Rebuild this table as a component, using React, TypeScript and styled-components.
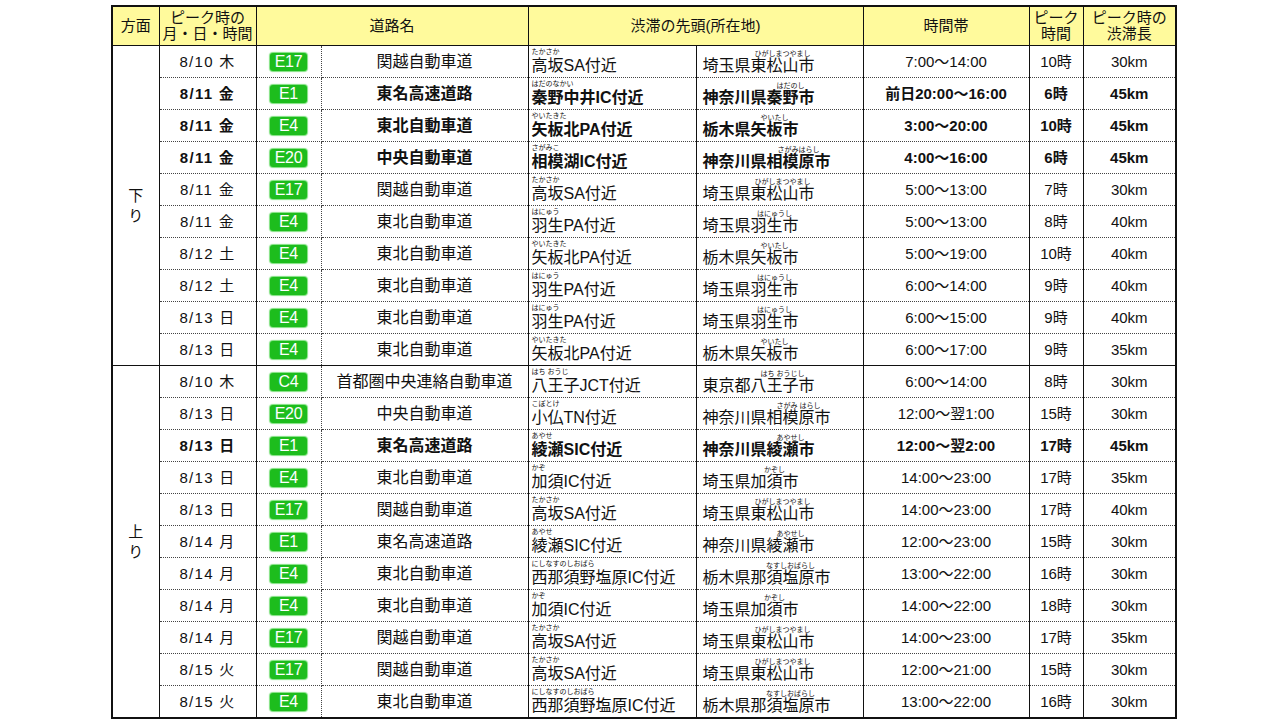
import React from 'react'
import styled, { createGlobalStyle, css } from 'styled-components'

const GlobalStyle = createGlobalStyle`
  html, body {
    margin: 0;
    padding: 0;
    background: #fff;
  }
  body {
    font-family: 'Liberation Sans', 'Noto Sans CJK JP', sans-serif;
    color: #111;
  }
`

const Page = styled.div`
  width: 1280px;
  height: 720px;
  padding: 5px 0 0 111px;
  box-sizing: border-box;
  overflow: hidden;
`

const Table = styled.table`
  width: 1064px;
  table-layout: fixed;
  border-collapse: collapse;
  border: 2px solid #111;
`

const Head = styled.th`
  height: 38px;
  padding: 0;
  background: #fffa9c;
  border-right: 1px solid #111;
  border-bottom: 1px solid #111;
  font-weight: 400;
  font-size: 15px;
  line-height: 16px;
  text-align: center;
  vertical-align: middle;
`

const Cell = styled.td<{ $bold?: boolean; $last?: boolean; $dotRight?: boolean; $align?: string; $size?: number }>`
  height: 31px;
  padding: 0;
  border-right: ${(p) => (p.$dotRight ? '1px dotted #444' : '1px solid #111')};
  border-bottom: ${(p) => (p.$last ? '1px solid #111' : '1px dotted #444')};
  font-size: ${(p) => p.$size || 15}px;
  line-height: 16px;
  text-align: ${(p) => p.$align || 'center'};
  vertical-align: middle;
  white-space: nowrap;
  overflow: hidden;
  ${(p) =>
    p.$bold &&
    css`
      font-weight: 700;
    `}
`

const DirCell = styled.td`
  padding: 0;
  border-right: 1px solid #111;
  border-bottom: 1px solid #111;
  text-align: center;
  vertical-align: middle;
  font-size: 15px;
  line-height: 20px;
`

const DateText = styled.span`
  letter-spacing: 1.3px;
`

const Badge = styled.span`
  display: inline-block;
  width: 37px;
  height: 18px;
  line-height: 18px;
  border-radius: 3px;
  background: #1dbd1d;
  box-shadow: 0 0 1px 1px #7ee07e;
  color: #fff;
  font-family: 'Liberation Sans', sans-serif;
  font-size: 16px;
  font-weight: 400;
  letter-spacing: -0.3px;
  text-align: center;
`

const SpotBox = styled.div`
  display: flex;
  flex-direction: column;
  justify-content: flex-end;
  height: 31px;
  padding-left: 3px;
  box-sizing: border-box;
  overflow: hidden;
`

const Kana = styled.span`
  display: block;
  height: 8px;
  font-size: 7px;
  line-height: 8px;
  font-weight: 400;
`

const Base = styled.span`
  display: block;
  font-size: 16px;
  line-height: 20px;
  padding-bottom: 1px;
`

const CityRuby = styled.ruby`
  ruby-position: over;
  ruby-align: center;
  rt {
    font-size: 7px;
    line-height: 8px;
    font-weight: 400;
    ruby-align: center;
  }
`

const CityBase = styled.span`
  display: block;
  font-size: 16px;
  line-height: 20px;
  padding: 0 0 1px 3px;
`

type Code = 'E17' | 'E1' | 'E4' | 'E20' | 'C4'

const ROADS: Record<Code, string> = {
  E17: '関越自動車道',
  E1: '東名高速道路',
  E4: '東北自動車道',
  E20: '中央自動車道',
  C4: '首都圏中央連絡自動車道',
}

type Spot = { name: string; kana: string; pref: string; city: string; cityKana: string }

const SPOTS: Record<string, Spot> = {
  takasaka: { name: '高坂SA付近', kana: 'たかさか', pref: '埼玉県', city: '東松山市', cityKana: 'ひがしまつやまし' },
  hadano: { name: '秦野中井IC付近', kana: 'はだのなかい', pref: '神奈川県', city: '秦野市', cityKana: 'はだのし' },
  yaita: { name: '矢板北PA付近', kana: 'やいたきた', pref: '栃木県', city: '矢板市', cityKana: 'やいたし' },
  sagamiko: { name: '相模湖IC付近', kana: 'さがみこ', pref: '神奈川県', city: '相模原市', cityKana: 'さがみはらし' },
  hanyu: { name: '羽生PA付近', kana: 'はにゅう', pref: '埼玉県', city: '羽生市', cityKana: 'はにゅうし' },
  hachioji: { name: '八王子JCT付近', kana: 'はち おうじ', pref: '東京都', city: '八王子市', cityKana: 'はち おうじし' },
  kobotoke: { name: '小仏TN付近', kana: 'こぼとけ', pref: '神奈川県', city: '相模原市', cityKana: 'さがみ はらし' },
  ayase: { name: '綾瀬SIC付近', kana: 'あやせ', pref: '神奈川県', city: '綾瀬市', cityKana: 'あやせし' },
  kazo: { name: '加須IC付近', kana: 'かぞ', pref: '埼玉県', city: '加須市', cityKana: 'かぞし' },
  nishinasuno: { name: '西那須野塩原IC付近', kana: 'にしなすのしおばら', pref: '栃木県', city: '那須塩原市', cityKana: 'なすしおばらし' },
}

type Row = { date: string; code: Code; spot: string; time: string; peak: string; len: string; bold?: boolean }

const DOWN: Row[] = [
  { date: '8/10 木', code: 'E17', spot: 'takasaka', time: '7:00～14:00', peak: '10時', len: '30km' },
  { date: '8/11 金', code: 'E1', spot: 'hadano', time: '前日20:00～16:00', peak: '6時', len: '45km', bold: true },
  { date: '8/11 金', code: 'E4', spot: 'yaita', time: '3:00～20:00', peak: '10時', len: '45km', bold: true },
  { date: '8/11 金', code: 'E20', spot: 'sagamiko', time: '4:00～16:00', peak: '6時', len: '45km', bold: true },
  { date: '8/11 金', code: 'E17', spot: 'takasaka', time: '5:00～13:00', peak: '7時', len: '30km' },
  { date: '8/11 金', code: 'E4', spot: 'hanyu', time: '5:00～13:00', peak: '8時', len: '40km' },
  { date: '8/12 土', code: 'E4', spot: 'yaita', time: '5:00～19:00', peak: '10時', len: '40km' },
  { date: '8/12 土', code: 'E4', spot: 'hanyu', time: '6:00～14:00', peak: '9時', len: '40km' },
  { date: '8/13 日', code: 'E4', spot: 'hanyu', time: '6:00～15:00', peak: '9時', len: '40km' },
  { date: '8/13 日', code: 'E4', spot: 'yaita', time: '6:00～17:00', peak: '9時', len: '35km' },
]

const UP: Row[] = [
  { date: '8/10 木', code: 'C4', spot: 'hachioji', time: '6:00～14:00', peak: '8時', len: '30km' },
  { date: '8/13 日', code: 'E20', spot: 'kobotoke', time: '12:00～翌1:00', peak: '15時', len: '30km' },
  { date: '8/13 日', code: 'E1', spot: 'ayase', time: '12:00～翌2:00', peak: '17時', len: '45km', bold: true },
  { date: '8/13 日', code: 'E4', spot: 'kazo', time: '14:00～23:00', peak: '17時', len: '35km' },
  { date: '8/13 日', code: 'E17', spot: 'takasaka', time: '14:00～23:00', peak: '17時', len: '40km' },
  { date: '8/14 月', code: 'E1', spot: 'ayase', time: '12:00～23:00', peak: '15時', len: '30km' },
  { date: '8/14 月', code: 'E4', spot: 'nishinasuno', time: '13:00～22:00', peak: '16時', len: '30km' },
  { date: '8/14 月', code: 'E4', spot: 'kazo', time: '14:00～22:00', peak: '18時', len: '30km' },
  { date: '8/14 月', code: 'E17', spot: 'takasaka', time: '14:00～23:00', peak: '17時', len: '35km' },
  { date: '8/15 火', code: 'E17', spot: 'takasaka', time: '12:00～21:00', peak: '15時', len: '30km' },
  { date: '8/15 火', code: 'E4', spot: 'nishinasuno', time: '13:00～22:00', peak: '16時', len: '30km' },
]

const COLS = [47, 97, 65, 207, 168, 167, 166, 54, 93]

function Section({ label, rows }: { label: string[]; rows: Row[] }) {
  return (
    <>
      {rows.map((r, i) => {
        const s = SPOTS[r.spot]
        const last = i === rows.length - 1
        return (
          <tr key={i}>
            {i === 0 && (
              <DirCell rowSpan={rows.length}>
                {label[0]}
                <br />
                {label[1]}
              </DirCell>
            )}
            <Cell $bold={r.bold} $last={last}>
              <DateText>{r.date}</DateText>
            </Cell>
            <Cell $last={last} $dotRight>
              <Badge>{r.code}</Badge>
            </Cell>
            <Cell $bold={r.bold} $last={last} $size={16}>
              {ROADS[r.code]}
            </Cell>
            <Cell $bold={r.bold} $last={last} $align="left">
              <SpotBox>
                <Kana>{s.kana}</Kana>
                <Base>{s.name}</Base>
              </SpotBox>
            </Cell>
            <Cell $bold={r.bold} $last={last} $align="left">
              <SpotBox>
                <CityBase>
                  {s.pref}
                  <CityRuby>
                    {s.city}
                    <rt>{s.cityKana}</rt>
                  </CityRuby>
                </CityBase>
              </SpotBox>
            </Cell>
            <Cell $bold={r.bold} $last={last}>
              {r.time}
            </Cell>
            <Cell $bold={r.bold} $last={last}>
              {r.peak}
            </Cell>
            <Cell $bold={r.bold} $last={last}>
              {r.len}
            </Cell>
          </tr>
        )
      })}
    </>
  )
}

export default function App() {
  return (
    <Page>
      <GlobalStyle />
      <Table>
        <colgroup>
          {COLS.map((w, i) => (
            <col key={i} style={{ width: w }} />
          ))}
        </colgroup>
        <thead>
          <tr>
            <Head>方面</Head>
            <Head>
              ピーク時の
              <br />
              月・日・時間
            </Head>
            <Head colSpan={2}>道路名</Head>
            <Head colSpan={2}>渋滞の先頭(所在地)</Head>
            <Head>時間帯</Head>
            <Head>
              ピーク
              <br />
              時間
            </Head>
            <Head>
              ピーク時の
              <br />
              渋滞長
            </Head>
          </tr>
        </thead>
        <tbody>
          <Section label={['下', 'り']} rows={DOWN} />
          <Section label={['上', 'り']} rows={UP} />
        </tbody>
      </Table>
    </Page>
  )
}
